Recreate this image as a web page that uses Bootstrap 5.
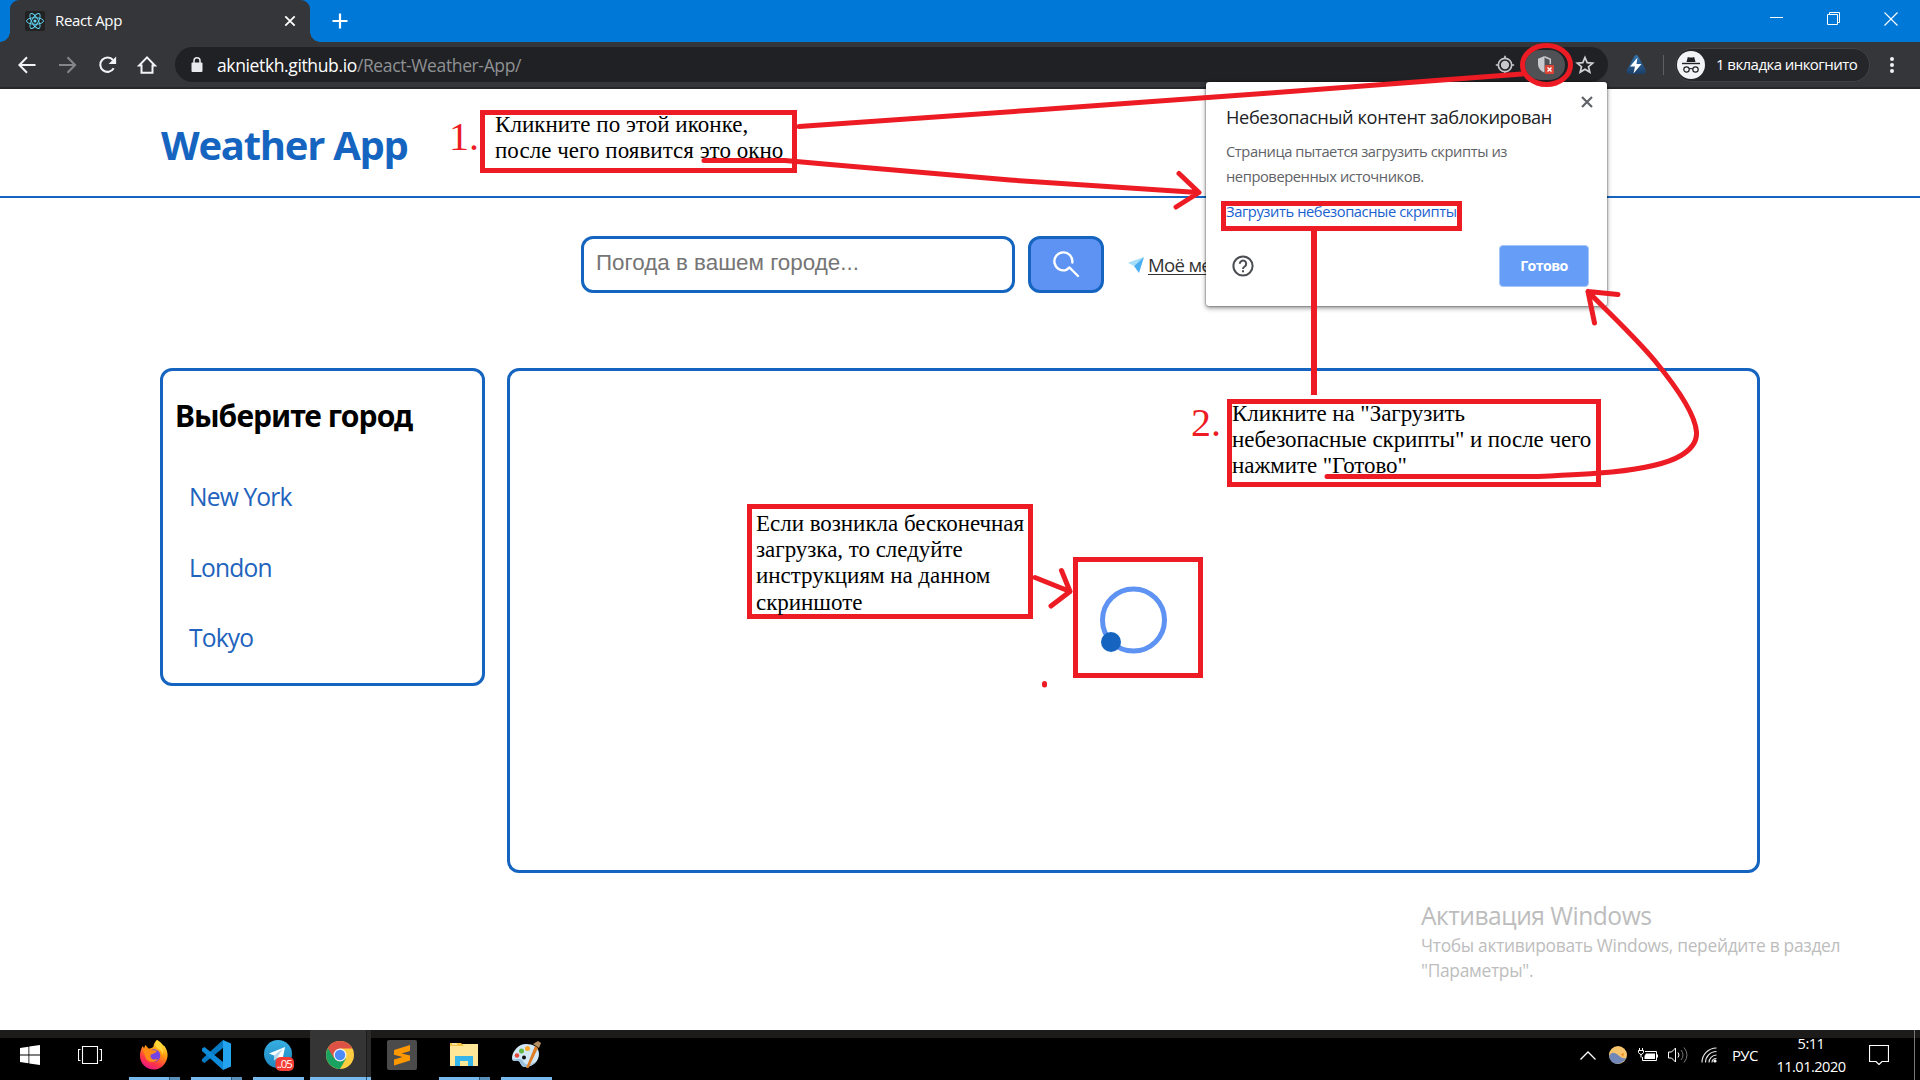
<!DOCTYPE html>
<html lang="ru">
<head>
<meta charset="utf-8">
<title>React App</title>
<link rel="stylesheet" href="https://cdn.jsdelivr.net/npm/bootstrap@5.3.0/dist/css/bootstrap.min.css">
<script src="https://cdn.jsdelivr.net/npm/bootstrap@5.3.0/dist/js/bootstrap.bundle.min.js"></script>
<style>
:root{--brand:#1565c0;--soft:#5e92f3;--ink:#ed1c24}
body{font-family:"Open Sans","Noto Sans",sans-serif;width:1920px;height:1080px;background:#fff;color:#000}
svg{display:block;flex:none}
/* browser window */
.tabstrip{height:42px;background:#0078d7;padding-left:10px}
.browser-tab{position:relative;width:300px;height:42px;background:#35363a;border-radius:9px 9px 0 0;padding:0 12px 0 15px;font-size:15px;letter-spacing:-.37px;color:#fff}
.browser-tab::before,.browser-tab::after{content:"";position:absolute;bottom:0;width:10px;height:10px}
.browser-tab::before{left:-10px;background:radial-gradient(circle at 0 0,transparent 9.5px,#35363a 10px)}
.browser-tab::after{right:-10px;background:radial-gradient(circle at 100% 0,transparent 9.5px,#35363a 10px)}
.tab-text{margin-left:10px;line-height:38px;padding-bottom:2px}
.new-tab{margin-left:19px}
.win-ctl{gap:43px;padding:12px 22px 0 0}
.toolbar{height:47px;background:#35363a;border-bottom:2px solid #26272a;padding-left:17px}
.nav-icons{gap:20px}
.omni{width:1433px;height:35px;border-radius:18px;background:#202124;margin-left:18px;padding-left:16px;font-size:17.5px;color:#fff}
.omni .url{letter-spacing:-.37px;margin-left:14px;line-height:34px}
.omni .path{color:#8f9194}
.omni-actions{gap:10px;padding-right:13px}
.shield{width:40px;height:30px;border-radius:15px;background:#505155}
.ext-icon{margin-left:17px}
.incog{width:195px;height:34px;border-radius:17px;background:#25262a;border:1px solid #414246;margin-left:11px;padding-left:1px;font-size:15px;letter-spacing:-.56px;color:#fff;gap:11px}
.vline{width:1px;height:20px;background:#5f6063;margin-left:16px}
.menu-dots{margin-left:19px}
/* page */
.site-head{height:109px;border-bottom:2px solid var(--brand);padding:4px 0 0 161px}
.site-title{font-size:40px;font-weight:700;letter-spacing:-1.27px;line-height:54px;color:var(--brand)}
.finder{margin:38px 0 0 581px;height:57px}
.finder input{width:434px;height:57px;border:3px solid var(--brand);border-radius:12px;padding:0 12px 3px 12px;font:22.4px "Liberation Sans",sans-serif;outline:0}
.finder input::placeholder{color:#757575;opacity:1}
.find-btn{width:76px;height:57px;border:3px solid var(--brand);border-radius:12px;background:var(--soft);margin-left:13px;padding:0}
.geo{margin-left:24px;font-size:18.6px;letter-spacing:-.7px;color:#333;line-height:28px}
.geo span{text-decoration:underline;text-underline-offset:2px;text-decoration-thickness:1px;margin-left:4px}
.panels{margin:75px 0 0 160px;gap:22px}
.panel{border:3px solid var(--brand);border-radius:12px}
.cities{width:325px;height:318px;padding:25px 0 0 12px}
.cities h2{font-family:"Noto Sans",sans-serif;font-size:30px;font-weight:700;letter-spacing:-.93px;line-height:40px;margin:0 0 26px}
.cities a{font-size:24.6px;letter-spacing:-.83px;line-height:70.6px;color:#2163bd;text-decoration:none;padding-left:14px;display:block}
.result{width:1253px;height:505px}
/* permission bubble */
.bubble{left:1206px;top:82px;width:401px;height:224px;background:#fff;border-radius:3px;box-shadow:0 0 2px rgba(0,0,0,.6),0 2px 5px rgba(0,0,0,.45);padding:22px 18px 0 20px;z-index:3}
.bubble h3{font-size:18.2px;letter-spacing:-.36px;line-height:26px;color:#202124;margin:0 0 9px;white-space:nowrap}
.bubble p{font-size:14.7px;letter-spacing:-.42px;line-height:25px;color:#5f6368;margin:0 0 9px;white-space:nowrap}
.bubble a{font-size:14.7px;letter-spacing:-.41px;line-height:26px;color:#1a5fd0;text-decoration:none;display:block;white-space:nowrap}
.bubble .close-x{right:14px;top:14px}
.bubble-foot{margin-top:21px;padding-left:6px}
.done-btn{width:90px;height:42px;border:1px solid #a5c5fb;border-radius:4px;background:#669df6;color:#fff;font-weight:700;font-size:14.2px;letter-spacing:-.6px;line-height:38px;padding:0}
/* drawn notes */
.ink{left:0;top:0;z-index:5}
.note{border:5px solid var(--ink);font:23px/26.2px "Liberation Serif",serif;white-space:nowrap;z-index:4}
.note-text{margin-top:-3px}
.step{font:40px/44px "Liberation Serif",serif;color:var(--ink);z-index:4}
.step-1{left:449px;top:115px}
.note-1{left:480px;top:110px;width:317px;height:63px;padding-left:10px;letter-spacing:.04px}
.step-2{left:1191px;top:401px}
.note-2{left:1227px;top:399px;width:374px;height:88px;letter-spacing:-.07px}
.note-3{left:747px;top:504px;width:286px;height:115px;padding:5px 0 0 4px;letter-spacing:-.03px}
/* watermark */
.activate{left:1421px;top:899px;color:#bdbdbd;white-space:nowrap}
.activate .a1{font-size:24.6px;letter-spacing:-.5px;line-height:34px}
.activate .a2{font-size:17.4px;letter-spacing:-.3px;line-height:25px}
/* taskbar */
.taskbar{left:0;top:1030px;width:1920px;height:50px;background:linear-gradient(#1c1b1a 8px,#000 8px)}
.task-item{height:50px;width:51px;margin-right:11px;position:relative;padding-right:2px}
.task-item::after{content:"";position:absolute;left:0;right:0;bottom:0;height:3px;background:#76b9ed}
.task-item.multi::after{background:linear-gradient(90deg,#76b9ed 40px,#2d5673 40px,#2d5673 41px,#5a91bb 41px)}
.task-item.idle{width:40px;margin-right:16px}
.task-item.idle::after{display:none}
.task-item.live{width:61px;margin:0 12px 0 -5px;background:linear-gradient(90deg,#353535 56px,#1c1c1c 56px,#1c1c1c 57px,#2b2b2b 57px)}
.task-item.live::after{background:linear-gradient(90deg,#76b9ed 56px,#2d5673 56px,#2d5673 57px,#76b9ed 57px)}
.system-items{width:129px;padding-left:20px;gap:38px}
.tray{left:1580px;top:0;height:50px;color:#fff;font-size:15px}
.tray .lang{margin-left:15px;letter-spacing:-.7px;width:27px}
.stamp{font-size:14.6px;letter-spacing:-.52px;line-height:23px;text-align:center;width:72px;margin-left:16px}
.desk-edge{margin-left:25px;width:1px;height:50px;background:#777}
</style>
</head>
<body class="position-relative overflow-hidden">

<div class="tabstrip d-flex">
  <div class="browser-tab d-flex align-items-center">
    <svg width="20" height="20" viewBox="0 0 20 20"><rect width="20" height="20" rx="2" fill="#222"/><g fill="none" stroke="#61dafb" stroke-width=".9"><ellipse cx="10" cy="10" rx="8.5" ry="3.3"/><ellipse cx="10" cy="10" rx="8.5" ry="3.3" transform="rotate(60 10 10)"/><ellipse cx="10" cy="10" rx="8.5" ry="3.3" transform="rotate(120 10 10)"/></g><circle cx="10" cy="10" r="1.6" fill="#61dafb"/></svg>
    <span class="tab-text">React App</span>
    <svg class="ms-auto" width="16" height="16" viewBox="0 0 16 16" stroke="#fff" stroke-width="1.8"><path d="M3.3 3.3l9.4 9.4M12.7 3.3l-9.4 9.4"/></svg>
  </div>
  <svg class="new-tab align-self-center" width="24" height="24" viewBox="0 0 24 24" stroke="#fff" stroke-width="2.2"><path d="M8 0" /><path d="M11.5 4v15M4 11.500h15" transform="translate(-.5 .5)"/></svg>
  <div class="win-ctl d-flex ms-auto">
    <svg width="14" height="14" viewBox="0 0 14 14"><path d="M0 5.5h13" stroke="#fff"/></svg>
    <svg width="14" height="14" viewBox="0 0 14 14" fill="none" stroke="#fff"><path d="M.5 2.5h10v10h-10zM2.5 2.5v-2h10v10h-2"/></svg>
    <svg width="14" height="14" viewBox="0 0 14 14" stroke="#fff" stroke-width="1.1"><path d="M.5.5l13 13M13.5.5l-13 13"/></svg>
  </div>
</div>

<div class="toolbar d-flex align-items-center">
  <div class="nav-icons d-flex">
    <svg width="20" height="20" viewBox="0 0 20 20" fill="none" stroke="#f1f3f4" stroke-width="2"><path d="M18.500 10H3M10 2.300L2.400 10l7.600 7.700"/></svg>
    <svg width="20" height="20" viewBox="0 0 20 20" fill="none" stroke="#85868a" stroke-width="2"><path d="M2 10h15.500M10.500 2.300L18.100 10l-7.600 7.700"/></svg>
    <svg width="20" height="20" viewBox="0 0 20 20"><path d="M16.700 13.300A7.200 7.200 0 1 1 16 5" fill="none" stroke="#f1f3f4" stroke-width="2.100"/><path d="M19.100 1.500V9h-7.500z" fill="#f1f3f4"/></svg>
    <svg width="20" height="20" viewBox="0 0 20 20" fill="none" stroke="#f1f3f4" stroke-width="2"><path d="M4.500 10.500v7.200h11v-7.200h2.400L10 2.400l-7.900 8.100z"/></svg>
  </div>
  <div class="omni d-flex align-items-center">
    <svg width="12" height="16" viewBox="0 0 12 16"><rect x=".5" y="5.500" width="11" height="9.500" rx="1" fill="#e8eaed"/><path d="M3 6V3.800a3 3 0 0 1 6 0V6" fill="none" stroke="#e8eaed" stroke-width="1.500"/></svg>
    <span class="url">aknietkh.github.io<span class="path">/React-Weather-App/</span></span>
    <div class="omni-actions d-flex align-items-center ms-auto">
      <svg width="20" height="20" viewBox="0 0 20 20" fill="none" stroke="#c4c7cb" stroke-width="1.700"><circle cx="10" cy="10" r="6.700"/><circle cx="10" cy="10" r="3.300" fill="#c4c7cb"/><path d="M10 .800v3M10 16.200v3M.800 10h3M16.200 10h3"/></svg>
      <div class="shield d-flex align-items-center justify-content-center">
        <svg width="20" height="20" viewBox="0 0 20 20"><path d="M9.500 1L3 3.700v5c0 4.200 2.700 7.300 6.500 8.900z" fill="#c8cacd"/><path d="M9.500 1.800l5.800 2.500V9" fill="none" stroke="#c8cacd" stroke-width="1.500"/><rect x="10" y="10" width="9" height="9" rx="1" fill="#db4437"/><path d="M12.500 12.500l4 4M16.500 12.500l-4 4" stroke="#fff" stroke-width="1.400"/></svg>
      </div>
      <svg width="20" height="20" viewBox="0 0 20 20" fill="none" stroke="#d0d2d5" stroke-width="1.700"><path d="M10 2.500l2.200 5.100 5.500.5-4.200 3.600 1.300 5.400L10 14.200l-4.800 2.900 1.300-5.400-4.200-3.600 5.500-.5z"/></svg>
    </div>
  </div>
  <svg class="ext-icon" width="22" height="22" viewBox="0 0 22 22"><defs><linearGradient id="ext" x2="0" y2="1"><stop stop-color="#3474ac"/><stop offset="1" stop-color="#1c3f68"/></linearGradient></defs><path d="M9.500 2q2-2 3.500 0l7.500 13.500q1 4-2 4.500h-14q-4-.5-2.500-4.500z" fill="url(#ext)"/><path d="M12.500 3.500L5 12.500h5L8.500 19.500l8-9.500h-5z" fill="#fff"/></svg>
  <div class="vline"></div>
  <div class="incog d-flex align-items-center">
    <svg width="28" height="28" viewBox="0 0 28 28"><circle cx="14" cy="14" r="14" fill="#f1f3f4"/><path d="M9.500 11l1.300-5q3.200 1 6.400 0l1.300 5z" fill="#202124"/><path d="M5 12.500h18" stroke="#202124" stroke-width="1.400"/><g fill="none" stroke="#202124" stroke-width="1.200"><circle cx="9.500" cy="18.500" r="2.700"/><circle cx="18.500" cy="18.500" r="2.700"/><path d="M12.200 18q1.800-1 3.600 0"/></g></svg>
    <span>1 вкладка инкогнито</span>
  </div>
  <svg class="menu-dots" width="6" height="18" viewBox="0 0 6 18" fill="#f1f3f4"><circle cx="3" cy="3" r="2"/><circle cx="3" cy="9" r="2"/><circle cx="3" cy="15" r="2"/></svg>
</div>

<header class="site-head d-flex align-items-center"><div class="site-title">Weather App</div></header>

<main>
  <form class="finder d-flex align-items-center">
    <input type="text" placeholder="Погода в вашем городе...">
    <button type="button" class="find-btn d-flex align-items-center justify-content-center" aria-label="Поиск">
      <svg width="27" height="27" viewBox="0 0 27 27" fill="none" stroke="#fff" stroke-width="2.400" stroke-linecap="round"><path d="M13.500 18.800A9 9 0 1 1 19.300 11.500M16.500 16.500l8.500 8.500M13.500 18.800l3-2.300"/></svg>
    </button>
    <div class="geo d-flex align-items-center">
      <svg width="16" height="16" viewBox="0 0 16 16"><path d="M0 5.800L16 0 6 9z" fill="#a5dcf8"/><path d="M16 0L11 16 6 9z" fill="#4aaef2"/></svg>
      <span>Моё ме</span>
    </div>
  </form>
  <div class="panels d-flex align-items-start">
    <nav class="panel cities">
      <h2>Выберите город</h2>
      <a href="#">New York</a>
      <a href="#">London</a>
      <a href="#">Tokyo</a>
    </nav>
    <section class="panel result"></section>
  </div>
</main>

<div class="bubble position-absolute">
  <svg class="close-x position-absolute" width="12" height="12" viewBox="0 0 12 12" stroke="#5f6368" stroke-width="2.200"><path d="M1 1l10 10M11 1L1 11"/></svg>
  <h3>Небезопасный контент заблокирован</h3>
  <p>Страница пытается загрузить скрипты из<br>непроверенных источников.</p>
  <a href="#">Загрузить небезопасные скрипты</a>
  <div class="bubble-foot d-flex align-items-center justify-content-between">
    <svg width="22" height="22" viewBox="0 0 22 22" fill="none" stroke="#4a4d51" stroke-width="2"><circle cx="11" cy="11" r="9.600"/><path d="M7.800 8.800a3.200 3.200 0 1 1 4.900 2.700c-1.200.8-1.700 1.300-1.700 2.500"/><path d="M11 15.200v2"/></svg>
    <button type="button" class="done-btn">Готово</button>
  </div>
</div>

<div class="step step-1 position-absolute">1.</div>
<div class="note note-1 position-absolute"><div class="note-text">Кликните по этой иконке,<br>после чего появится это окно</div></div>
<div class="step step-2 position-absolute">2.</div>
<div class="note note-2 position-absolute"><div class="note-text">Кликните на "Загрузить<br>небезопасные скрипты" и после чего<br>нажмите "Готово"</div></div>
<div class="note note-3 position-absolute"><div class="note-text">Если возникла бесконечная<br>загрузка, то следуйте<br>инструкциям на данном<br>скриншоте</div></div>

<svg class="ink position-absolute" width="1920" height="1080" viewBox="0 0 1920 1080" fill="none" stroke="#ed1c24" stroke-width="5" stroke-linecap="round" stroke-linejoin="round">
  <circle cx="1133.500" cy="620" r="31" stroke="#5e92f3"/>
  <circle cx="1111" cy="642" r="10" fill="#1565c0" stroke="none"/>
  <ellipse cx="1546.500" cy="65" rx="24" ry="19.500"/>
  <path d="M799 126.500L1035 110L1270 93L1522 74"/>
  <path d="M704 160.500H785L830 164.500L1010 180L1198 192.500M1179 173.500L1199 192.500L1176 207"/>
  <path d="M1223.500 203.500h236v25h-236z" stroke-linejoin="miter"/>
  <path d="M1314 231V395" stroke-width="6" stroke-linecap="butt"/>
  <path d="M1327 476.500H1538C1570 475 1590 474 1612 472C1640 469 1665 465 1680 456C1694 448 1697 440 1696.500 432C1695 412 1674 384 1655 361C1635 337 1612 316 1588 291.500M1618 294.500L1588 291.500L1594.500 323"/>
  <path d="M1035 577.500L1070 591.500M1061.500 570.500L1070 591.500L1051 606"/>
  <path d="M1075.500 559.500h125v116h-125z" stroke-linejoin="miter"/>
  <path d="M1044.500 683.500v1.500"/>
</svg>

<div class="activate position-absolute"><div class="a1">Активация Windows</div><div class="a2">Чтобы активировать Windows, перейдите в раздел<br>"Параметры".</div></div>

<footer class="taskbar position-absolute d-flex">
  <div class="system-items d-flex align-items-center">
    <svg width="20" height="20" viewBox="0 0 20 20" fill="#fff"><path d="M0 3l8.500-1.300v7.900H0zM9.300 1.500L20 0v9.600H9.300zM0 10.400h8.500v7.900L0 17zM9.300 10.400H20V20L9.300 18.500z"/></svg>
    <svg width="24" height="18" viewBox="0 0 24 18" fill="none" stroke="#fff" stroke-width="1.100"><path d="M4.500.5h15v17h-15zM2.500 3.500h-2v11h2M21.500 3.500h2v11h-2"/></svg>
  </div>
  <div class="task-item multi d-flex align-items-center justify-content-center">
    <svg width="30" height="30" viewBox="0 0 30 30"><defs><linearGradient id="fx" x1=".8" y1="0" x2=".3" y2="1"><stop stop-color="#fff44f"/><stop offset=".4" stop-color="#ff980e"/><stop offset=".75" stop-color="#ff3647"/><stop offset="1" stop-color="#e31587"/></linearGradient></defs><path d="M18 0c5 2.500 6 6 7.500 6 4 6 4 12 .5 17.200C23 27.800 19 29.500 15 29.500 7 29.500 1 23.500 1 16c0-4 1-6.500 2.500-10l1.500 2L6.500 5l3 3.500c2 0 4-.5 5-2C14.500 4 16 1.500 18 0z" fill="url(#fx)"/><circle cx="15" cy="15.500" r="6.300" fill="#7542e5"/><path d="M3.500 9c3.500-1 5.500-.5 7.500 1l7 .5c-1 3-4 3-6 4-2 4 3 6.500 7 4-2 4.500-9 5-12 0z" fill="#ff8a16"/><path d="M18 0c4 3 7 8 6 15-1-4-3-5.500-6-7-2-2-1.500-5 0-8z" fill="#ffd63a"/></svg>
  </div>
  <div class="task-item multi d-flex align-items-center justify-content-center">
    <svg width="30" height="30" viewBox="0 0 30 30"><path d="M22 0L1 19l0 2.500 2.500 1.500L22 8z" fill="#0879c3"/><path d="M22 30L1 11V8.500L3.500 7 22 22z" fill="#0e8ad8"/><path d="M22 0l8 3.500v23L22 30z" fill="#24a3ee"/></svg>
  </div>
  <div class="task-item d-flex align-items-center justify-content-center">
    <svg width="32" height="32" viewBox="0 0 32 32"><defs><linearGradient id="tg" x2="0" y2="1"><stop stop-color="#37aee2"/><stop offset="1" stop-color="#1e88bf"/></linearGradient></defs><circle cx="16" cy="15" r="14" fill="url(#tg)"/><path d="M7 14.500L23 8l-3 15-5-4-3 2.500v-5z" fill="#fff"/><path d="M12 16.500l9-7-6 9.500-3 2.500z" fill="#b5d8ec"/><rect x="13.500" y="18" width="18.500" height="14" rx="5" fill="#f23c34"/><text x="22.800" y="29" font-size="11.500" fill="#fff" text-anchor="middle" font-family="Open Sans" textLength="16">..05</text></svg>
  </div>
  <div class="task-item live d-flex align-items-center justify-content-center">
    <svg width="28" height="28" viewBox="0 0 28 28"><circle cx="14" cy="14" r="14" fill="#ffcd40"/><path d="M14 14L1.900 7A14 14 0 0 0 14 28l6-10.500z" fill="#1aa260"/><path d="M14 7.500h12.400A14 14 0 0 0 1.900 7l6.200 10.500z" fill="#de5246"/><circle cx="14" cy="14" r="6.500" fill="#f1f1f1"/><circle cx="14" cy="14" r="5.200" fill="#4c8bf5"/></svg>
  </div>
  <div class="task-item idle d-flex align-items-center justify-content-center">
    <svg width="30" height="30" viewBox="0 0 30 30"><rect width="30" height="30" rx="2" fill="#4b4b4b"/><path d="M7 10l16-5v6L14.500 13.500 23 15.500v5L7 25.500v-6l8.500-2.500L7 14.700z" fill="#ff9800"/></svg>
  </div>
  <div class="task-item multi d-flex align-items-center justify-content-center">
    <svg width="28" height="28" viewBox="0 0 28 28"><path d="M0 3h28v22H0z" fill="#ffe797"/><path d="M0 2h11l3 3H0z" fill="#f5c342"/><path d="M2 3h5" stroke="#fff"/><path d="M5 15h18v10h-5v-5h-8v5H5z" fill="#35b5ea"/></svg>
  </div>
  <div class="task-item d-flex align-items-center justify-content-center">
    <svg width="30" height="30" viewBox="0 0 30 30"><path d="M15 4C7 4 1 12 1 18c0 4 4 3 6 3 3 0 2 6 7 6 8 0 14-6 14-13S22 4 15 4z" fill="#d2e8f6"/><path d="M1 18c0 4 4 3 6 3 3 0 2 6 7 6 4 0 8-2 11-6-5 4-11 5-13 0-2-4-8 0-11-3z" fill="#9dc0dc"/><circle cx="6" cy="15.500" r="2.300" fill="#e8483c"/><circle cx="10.500" cy="11" r="2.500" fill="#63b846"/><circle cx="16.500" cy="8.500" r="2.500" fill="#fba72c"/><circle cx="13" cy="17.500" r="2" fill="#111"/><path d="M24 6L15 28l2.500 0L27 8z" fill="#dd7d25"/><path d="M22 4l5-3 3 2-2 5z" fill="#b48e62"/></svg>
  </div>

  <div class="tray position-absolute d-flex align-items-center">
    <svg width="16" height="9" viewBox="0 0 16 9" fill="none" stroke="#fff" stroke-width="1.300"><path d="M.5 8.500L8 1l7.500 7.500"/></svg>
    <svg style="margin-left:13px" width="18" height="18" viewBox="0 0 18 18"><circle cx="9" cy="9" r="9" fill="#f6c46c"/><path d="M0 10c3-5 6-3 9-1s4 4 8 3c-3 7-15 9-17-2z" fill="#7087b8"/><path d="M12 8l3-1-1 4z" fill="#ef8523"/></svg>
    <svg style="margin-left:11px" width="20" height="15" viewBox="0 0 20 15" fill="none" stroke="#fff"><path d="M7 3.500h11.500v9h-14V9"/><path d="M8 5.500h9v5.500H6.500V8z" fill="#fff"  stroke="none"/><path d="M19.500 6.500v3M1.500 0v2M4.500 0v2M.5 2.500h5v2q-2.500 4-5 0zM3 6v3.500"/></svg>
    <svg style="margin-left:10px" width="20" height="18" viewBox="0 0 20 18" fill="none" stroke="#fff"><path d="M.5 6h3l4-4v14l-4-4h-3zM10 6.500q2 2.500 0 5"/><path d="M13 4q4 5 0 10M16 1.500q6 7.500 0 15" stroke="#777"/></svg>
    <svg style="margin-left:13px" width="16" height="16" viewBox="0 0 16 16" fill="none" stroke="#eee" stroke-width="1.100"><path d="M1 15.500C1 8 7 1 15.500 1M4.500 15.500C4.500 10 9 4.500 15.500 4.500M8 15.500C8 12 11 8 15.500 8"/><path d="M11 15.500q0-4 4.500-4"/><circle cx="14" cy="14" r="1.600" fill="#fff" stroke="none"/></svg>
    <span class="lang">РУС</span>
    <div class="stamp">5:11<br>11.01.2020</div>
    <svg style="margin-left:22px" width="20" height="20" viewBox="0 0 20 20" fill="none" stroke="#fff" stroke-width="1.200"><path d="M.5.5h19v16h-6.500l-3 3-3-3H.5z"/></svg>
    <div class="desk-edge"></div>
  </div>
</footer>
</body>
</html>
